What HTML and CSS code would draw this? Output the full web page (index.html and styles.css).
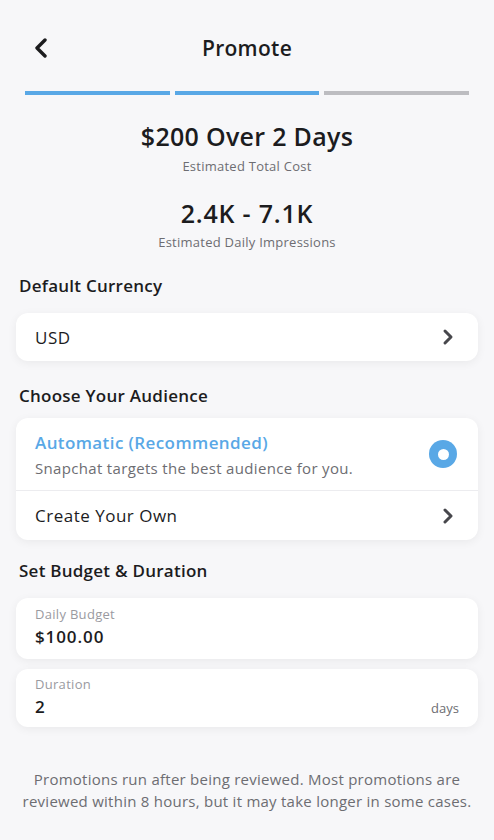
FILE: index.html
```html
<!DOCTYPE html>
<html>
<head>
<meta charset="utf-8">
<link rel="stylesheet" href="styles.css">
</head>
<body>
<div class="page">
  <header class="topbar">
    <span class="back">
      <svg width="14" height="20" viewBox="0 0 14 20"><path d="M11 2 L3 10 L11 18" fill="none" stroke="#1c1c1e" stroke-width="3.4" stroke-linecap="round" stroke-linejoin="round"/></svg>
    </span>
    <h1 class="title">Promote</h1>
  </header>
  <div class="progress">
    <span class="seg on"></span>
    <span class="seg on"></span>
    <span class="seg"></span>
  </div>

  <section class="summary">
    <div class="big">$200 Over 2 Days</div>
    <div class="cap">Estimated Total Cost</div>
    <div class="big second">2.4K - 7.1K</div>
    <div class="cap">Estimated Daily Impressions</div>
  </section>

  <h2 class="section s-currency">Default Currency</h2>
  <div class="card row single">
    <span class="rowtext">USD</span>
    <svg class="chev" width="12" height="18" viewBox="0 0 12 18"><path d="M3 3 L9 9 L3 15" fill="none" stroke="#47474c" stroke-width="3" stroke-linecap="round" stroke-linejoin="round"/></svg>
  </div>

  <h2 class="section s-audience">Choose Your Audience</h2>
  <div class="card audience">
    <div class="row auto">
      <div class="autotext">
        <div class="blue">Automatic (Recommended)</div>
        <div class="sub">Snapchat targets the best audience for you.</div>
      </div>
      <span class="radio"></span>
    </div>
    <div class="row own">
      <span class="rowtext">Create Your Own</span>
      <svg class="chev" width="12" height="18" viewBox="0 0 12 18"><path d="M3 3 L9 9 L3 15" fill="none" stroke="#47474c" stroke-width="3" stroke-linecap="round" stroke-linejoin="round"/></svg>
    </div>
  </div>

  <h2 class="section s-budget">Set Budget &amp; Duration</h2>
  <div class="card field budget">
    <div class="label">Daily Budget</div>
    <div class="value">$100.00</div>
  </div>
  <div class="card field duration">
    <div class="label">Duration</div>
    <div class="valrow">
      <span class="value">2</span>
      <span class="unit">days</span>
    </div>
  </div>

  <p class="note">Promotions run after being reviewed. Most promotions are reviewed within 8 hours, but it may take longer in some cases.</p>
</div>
</body>
</html>
```

FILE: styles.css
```css
html, body {
  margin: 0;
  padding: 0;
  background: #f7f7f9;
}
body {
  font-family: "Open Sans", "Noto Sans", sans-serif;
  color: #1c1c1e;
  width: 494px;
  height: 840px;
  overflow: hidden;
}
.page {
  padding: 0 16px;
}
.topbar {
  position: relative;
  height: 88px;
  display: flex;
  align-items: center;
  justify-content: center;
}
.back {
  position: absolute;
  left: 18px;
  top: 38px;
}
.title {
  margin: 0;
  font-size: 21px;
  font-weight: 600;
  padding-top: 7px;
  letter-spacing: 0.3px;
}
.progress {
  display: flex;
  gap: 5px;
  padding: 0 9px;
  margin-top: 3px;
}
.seg {
  flex: 1;
  height: 4px;
  background: #bdbdc1;
}
.seg.on {
  background: #59a8e6;
}
.summary {
  text-align: center;
  padding-top: 25px;
}
.big {
  font-size: 25px;
  font-weight: 600;
  line-height: 32px;
  letter-spacing: 0.3px;
}
.big.second {
  margin-top: 22px;
  letter-spacing: 0.8px;
}
.cap {
  font-size: 13px;
  color: #6d6d72;
  line-height: 18px;
  margin-top: 5px;
  letter-spacing: 0.25px;
}
.big.second + .cap {
  margin-top: 4px;
}
.section {
  margin: 0;
  font-size: 17px;
  font-weight: 600;
  padding-left: 3px;
  line-height: 22px;
  letter-spacing: 0.25px;
}
.s-currency {
  margin-top: 24px;
}
.s-audience {
  margin-top: 24px;
}
.s-budget {
  margin-top: 20px;
}
.card {
  background: #fff;
  border-radius: 12px;
  box-shadow: 0 2px 10px rgba(0, 0, 0, 0.06);
  margin-top: 16px;
}
.card.audience {
  margin-top: 11px;
}
.row {
  display: flex;
  align-items: center;
  justify-content: space-between;
  padding: 0 24px 0 19px;
}
.single {
  height: 48px;
}
.rowtext {
  font-size: 17px;
  letter-spacing: 0.5px;
}
.auto {
  height: 73px;
  border-bottom: 1px solid #ececef;
  box-sizing: border-box;
  padding-right: 21px;
}
.autotext {
  padding-top: 1px;
}
.blue {
  color: #59a8e6;
  font-size: 17px;
  font-weight: 600;
  line-height: 22px;
  letter-spacing: 0.4px;
}
.sub {
  color: #6d6d72;
  font-size: 15px;
  line-height: 20px;
  margin-top: 4px;
  letter-spacing: 0.33px;
}
.radio {
  width: 28px;
  height: 28px;
  border-radius: 50%;
  background: #59a8e6;
  display: flex;
  align-items: center;
  justify-content: center;
}
.radio::after {
  content: "";
  width: 11px;
  height: 11px;
  border-radius: 50%;
  background: #fff;
}
.own {
  height: 49px;
}
.card.field {
  padding: 0 19px;
  box-sizing: border-box;
}
.budget {
  height: 61px;
}
.duration {
  height: 58px;
  margin-top: 10px;
}
.label {
  font-size: 13px;
  color: #9a9a9f;
  line-height: 16px;
  padding-top: 8px;
  letter-spacing: 0.3px;
}
.value {
  font-size: 17px;
  font-weight: 600;
  line-height: 22px;
  margin-top: 4px;
  letter-spacing: 0.9px;
}
.duration .label {
  padding-top: 7px;
}
.duration .value {
  margin-top: 0;
}
.valrow {
  display: flex;
  justify-content: space-between;
  align-items: baseline;
  margin-top: 4px;
}
.unit {
  font-size: 13px;
  color: #6d6d72;
}
.note {
  margin: 41px 0 0;
  text-align: center;
  font-size: 15px;
  line-height: 22px;
  color: #6d6d72;
  letter-spacing: 0.25px;
}
```
